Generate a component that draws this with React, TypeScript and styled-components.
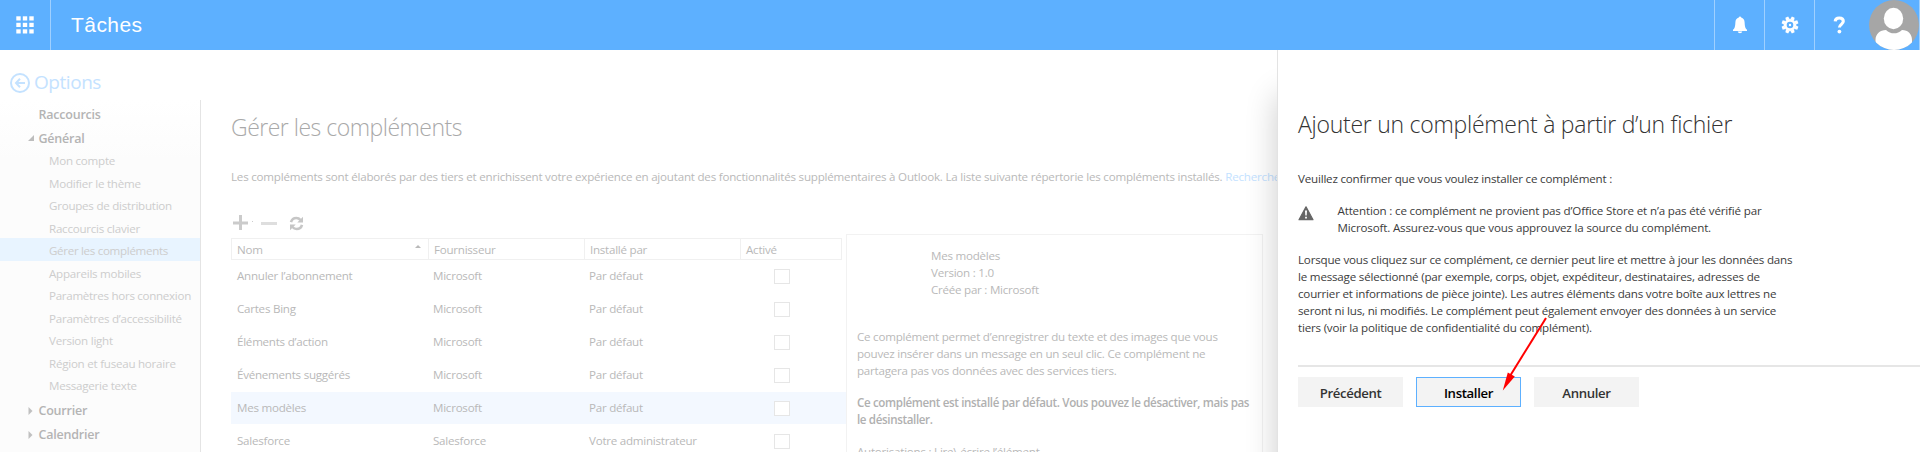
import React from "react";
import styled, { createGlobalStyle } from "styled-components";

const BLUE = "#5db0ff";

const GlobalStyle = createGlobalStyle`
  * { box-sizing: border-box; }
  body { margin: 0; overflow: hidden; background: #fff; }
  p, h1, h2 { margin: 0; font-weight: 400; }
  svg { display: block; }
`;

const Page = styled.div`
  display: flex;
  flex-direction: column;
  width: 1920px;
  height: 452px;
  overflow: hidden;
  font-family: "Open Sans", "Noto Sans", sans-serif;
  font-size: 11.6px;
  letter-spacing: -0.25px;
`;

/* ---------- top bar ---------- */

const TopBar = styled.header`
  display: flex;
  flex: none;
  height: 50px;
  background: ${BLUE};
  color: #fff;
  position: relative;
  z-index: 2;
`;

const Launcher = styled.div`
  width: 51px;
  border-right: 1px solid #9fd0ff;
  display: flex;
  align-items: center;
  justify-content: center;
`;

const AppName = styled.div`
  flex: 1;
  padding-left: 20px;
  font: 21px/49px "Liberation Sans", sans-serif;
  letter-spacing: 0.45px;
`;

const BarButton = styled.div`
  width: 50px;
  border-left: 1px solid #9fd0ff;
  display: flex;
  align-items: center;
  justify-content: center;
`;

const Avatar = styled.div`
  width: 56px;
  padding-left: 5px;
  border-right: 1px solid #9fd0ff;
`;

/* ---------- body ---------- */

const Body = styled.div`
  display: flex;
  flex: 1;
  min-height: 0;
`;

const Side = styled.aside`
  width: 201px;
  flex: none;
  display: flex;
  flex-direction: column;
`;

const BackLink = styled.div`
  display: flex;
  height: 50px;
  flex: none;
  padding: 16px 0 0 10px;
  gap: 4px;
  color: #c4e2ff;
  font-size: 19px;
  line-height: 32px;
  letter-spacing: -0.45px;
  svg { margin-top: 7px; }
`;

const Nav = styled.nav`
  flex: 1;
  min-height: 0;
  padding-top: 2px;
  border-right: 1px solid #e4e4e4;
  background: linear-gradient(#fff, #fcfcfc 60px);
`;

const Group = styled.div`
  display: flex;
  align-items: center;
  height: 24px;
  padding-left: 28px;
  color: #b4b4b4;
  font-size: 12.5px;
  font-weight: 600;
  letter-spacing: -0.22px;
`;

const Marker = styled.span`
  width: 10.5px;
  flex: none;
`;

const SubList = styled.div`
  margin: -2px 0 3px;
`;

const SubItem = styled.div<{ $active?: boolean; $spacing?: number }>`
  height: 22.5px;
  padding: 3px 0 0 49px;
  line-height: 19.5px;
  white-space: nowrap;
  color: #cdcdcd;
  background: ${p => (p.$active ? "#e8f4ff" : "transparent")};
  letter-spacing: ${p => p.$spacing ?? -0.25}px;
`;

const Content = styled.main`
  flex: 1;
  min-width: 0;
  overflow: hidden;
  padding: 61px 0 0 30px;
  color: #b9b9b9;
`;

const Title = styled.h1`
  font-size: 23px;
  line-height: 32px;
  font-weight: 300;
  letter-spacing: -0.5px;
  color: #a9a9a9;
`;

const Intro = styled.p`
  margin-top: 25px;
  line-height: 18px;
  white-space: nowrap;
  letter-spacing: -0.215px;
  a { color: #c4e2ff; }
`;

const Toolbar = styled.div`
  display: flex;
  height: 48px;
  padding: 29px 0 0 2px;
`;

const Split = styled.div`
  display: flex;
`;

const Table = styled.div`
  width: 615px;
  padding-top: 4px;
`;

const HeadRow = styled.div`
  display: grid;
  grid-template-columns: 196px 156px 156px 101px;
  width: 611px;
  height: 22px;
  border: 1px solid #f0f0f0;
  line-height: 21px;
`;

const HeadCell = styled.div`
  display: flex;
  justify-content: space-between;
  padding: 0 7px 0 5px;
  & + & { border-left: 1px solid #f0f0f0; }
  svg { margin-top: 6px; }
`;

const Row = styled.div<{ $selected?: boolean }>`
  display: grid;
  grid-template-columns: 197px 156px 156px 106px;
  height: 32px;
  margin-bottom: 1px;
  line-height: 32px;
  background: ${p => (p.$selected ? "#f3f8ff" : "transparent")};
`;

const Cell = styled.div`
  padding-left: 5px;
  white-space: nowrap;
  &:first-child { padding-left: 6px; }
`;

const Box = styled.div`
  width: 16px;
  height: 15px;
  margin: 9px 0 0 34px;
  border: 1px solid #e6e6e6;
  background: #fff;
`;

const Detail = styled.section`
  width: 417px;
  height: 230px;
  padding: 12px 0 0 10px;
  border: 1px solid #f2f2f2;
  line-height: 17px;
  white-space: nowrap;
`;

const Info = styled.div`
  margin: 0 0 30px 74px;
`;

const Para = styled.p<{ $strong?: boolean }>`
  margin-bottom: 15px;
  font-weight: ${p => (p.$strong ? 600 : 400)};
  letter-spacing: ${p => (p.$strong ? -0.36 : -0.24)}px;
  color: ${p => (p.$strong ? "#b0b0b0" : "inherit")};
`;

/* ---------- right panel ---------- */

const Panel = styled.section`
  position: relative;
  z-index: 1;
  flex: none;
  width: 643px;
  padding: 58px 0 0 20px;
  border-left: 1px solid #e3e3e3;
  background: #fff;
  color: #3c3c3c;
  box-shadow: 0 45px 30px rgba(0, 0, 0, 0.2);
`;

const PanelTitle = styled.h2`
  margin-bottom: 30px;
  font-size: 23px;
  line-height: 32px;
  font-weight: 300;
  letter-spacing: -0.26px;
  color: #333;
`;

const PanelText = styled.p<{ $spacing?: number }>`
  line-height: 17px;
  white-space: nowrap;
  letter-spacing: ${p => p.$spacing ?? -0.2}px;
`;

const Warning = styled.div`
  display: flex;
  gap: 23.5px;
  margin: 15px 0;
  svg { margin-top: 4px; }
`;

const Actions = styled.div`
  display: flex;
  gap: 13px;
  margin-top: 29px;
  padding-top: 10px;
  border-top: 2px solid #e6e6e6;
`;

const Button = styled.button<{ $primary?: boolean }>`
  width: 105px;
  height: 30px;
  padding: 0;
  border: 1px solid ${p => (p.$primary ? BLUE : "#f3f3f3")};
  background: #f3f3f3;
  color: ${p => (p.$primary ? "#000" : "#333")};
  font: 600 13.2px/30px "Open Sans", sans-serif;
  letter-spacing: -0.36px;
`;

const Arrow = styled.svg`
  position: absolute;
  left: 219px;
  top: 264px;
  overflow: visible;
`;

const navItems = [
  { label: "Mon compte" },
  { label: "Modifier le thème" },
  { label: "Groupes de distribution" },
  { label: "Raccourcis clavier" },
  { label: "Gérer les compléments", active: true, spacing: -0.32 },
  { label: "Appareils mobiles" },
  { label: "Paramètres hors connexion", spacing: -0.3 },
  { label: "Paramètres d’accessibilité" },
  { label: "Version light" },
  { label: "Région et fuseau horaire" },
  { label: "Messagerie texte" },
];

const addins = [
  ["Annuler l’abonnement", "Microsoft", "Par défaut"],
  ["Cartes Bing", "Microsoft", "Par défaut"],
  ["Éléments d’action", "Microsoft", "Par défaut"],
  ["Événements suggérés", "Microsoft", "Par défaut"],
  ["Mes modèles", "Microsoft", "Par défaut"],
  ["Salesforce", "Salesforce", "Votre administrateur"],
];

const WaffleIcon = () => (
  <svg width="18" height="18" fill="#fff">
    {[0, 6.5, 13].map(y => [0, 6.5, 13].map(x => <rect key={`${x}-${y}`} x={x + 0.3} y={y + 0.3} width="4.4" height="4.2" />))}
  </svg>
);

const BellIcon = () => (
  <svg width="16" height="18" viewBox="0 0 16 18" fill="#fff">
    <path d="M8 .5c.7 0 1.1.4 1.2 1.1C11.400 2.200 12.500 4 12.600 6.200c.1 4.300.8 6.300 2.400 7.500v1.200H1v-1.200c1.600-1.200 2.300-3.200 2.400-7.500C3.500 4 4.600 2.200 6.800 1.600 6.900.9 7.300.5 8 .5zM5.800 15.600h4.400c-.2 1.100-1 1.700-2.200 1.700s-2-.6-2.200-1.700z" />
  </svg>
);

const GearIcon = () => (
  <svg width="18" height="18" viewBox="-9 -9 18 18" fill="#fff">
    <circle r="4.700" fill="none" stroke="#fff" strokeWidth="2.800" />
    {[0, 45, 90, 135, 180, 225, 270, 315].map(a => (
      <path key={a} d="M-2-5.500L-1.500-8.500H1.500L2-5.500z" transform={`rotate(${a + 22.5})`} />
    ))}
    <circle r="1.200" />
  </svg>
);

const HelpIcon = () => (
  <svg width="13" height="18" viewBox="0 0 13 18">
    <path d="M2.200 5.400C2.300 3.300 3.900 2 6.300 2s4 1.300 4 3.300c0 3-3.900 3.100-3.900 6.300" fill="none" stroke="#fff" strokeWidth="3.100" />
    <circle cx="6.400" cy="15.600" r="1.900" fill="#fff" />
  </svg>
);

const AvatarIcon = () => (
  <svg width="50" height="50" viewBox="0 0 50 50">
    <defs><clipPath id="round"><circle cx="25" cy="25" r="25" /></clipPath></defs>
    <g clipPath="url(#round)">
      <rect width="50" height="50" fill="#a6a6a6" />
      <ellipse cx="24.500" cy="18.500" rx="9.700" ry="10.700" fill="#fff" />
      <path d="M6.500 52V40c0-6 4.500-10 10.500-10 2.500 2.500 5 3.300 8 3.300s5.500-.8 8-3.300c6 0 10 4 10 10v12z" fill="#fff" />
    </g>
  </svg>
);

const BackIcon = () => (
  <svg width="20" height="20" viewBox="0 0 20 20" fill="none" stroke="#c4e2ff" strokeWidth="2">
    <circle cx="10" cy="10" r="9" />
    <path d="M15 10H6.500M10 5.800L6 10l4 4.200" />
  </svg>
);

const ToolbarIcons = () => (
  <svg width="73" height="17" viewBox="0 0 73 17">
    <path d="M0 6.500h15v3H0zM6 0h3v15H6z" fill="#cbcbcb" />
    <path d="M19 6h1v1h-1z" fill="#ccc" />
    <path d="M28 7h16v3H28z" fill="#dedede" />
    <g transform="translate(56.500 1)">
      <g fill="none" stroke="#c6c6c6" strokeWidth="2.600">
        <path d="M1.500 6.200C2.300 3.300 4.300 2 6.800 2c2 0 3.200.8 4.200 2" />
        <path d="M12.500 8.800c-.8 2.900-2.800 4.200-5.300 4.200-2 0-3.200-.8-4.200-2" />
      </g>
      <path d="M13.500.8v5.700H7.800zM.5 14.200V8.500h5.700z" fill="#c6c6c6" />
    </g>
  </svg>
);

const WarningIcon = () => (
  <svg width="16" height="15" viewBox="0 0 16 15">
    <path d="M8 .8L15 13.700H1z" fill="#666" stroke="#666" strokeWidth="1.200" strokeLinejoin="round" />
    <path d="M7 4.500h2l-.3 5H7.300zM7.100 10.700h1.800v1.800H7.100z" fill="#fff" />
  </svg>
);

const ClosedMark = () => (
  <svg width="5" height="8"><path d="M.5 0v8L4.500 4z" fill="#c0c0c0" /></svg>
);

const OpenMark = () => (
  <svg width="6" height="6"><path d="M6 0v6H0z" fill="#bdbdbd" /></svg>
);

export default function App() {
  return (
    <>
      <GlobalStyle />
      <Page>
        <TopBar>
          <Launcher><WaffleIcon /></Launcher>
          <AppName>Tâches</AppName>
          <BarButton><BellIcon /></BarButton>
          <BarButton><GearIcon /></BarButton>
          <BarButton><HelpIcon /></BarButton>
          <Avatar><AvatarIcon /></Avatar>
        </TopBar>
        <Body>
          <Side>
            <BackLink><BackIcon /><span>Options</span></BackLink>
            <Nav>
              <Group><Marker />Raccourcis</Group>
              <Group><Marker><OpenMark /></Marker>Général</Group>
              <SubList>
                {navItems.map(i => (
                  <SubItem key={i.label} $active={i.active} $spacing={i.spacing}>{i.label}</SubItem>
                ))}
              </SubList>
              <Group><Marker><ClosedMark /></Marker>Courrier</Group>
              <Group><Marker><ClosedMark /></Marker>Calendrier</Group>
            </Nav>
          </Side>
          <Content>
            <Title>Gérer les compléments</Title>
            <Intro>
              Les compléments sont élaborés par des tiers et enrichissent votre expérience en ajoutant des fonctionnalités supplémentaires à Outlook. La liste suivante répertorie les compléments installés. <a>Recherche</a>
            </Intro>
            <Toolbar><ToolbarIcons /></Toolbar>
            <Split>
              <Table>
                <HeadRow>
                  <HeadCell>Nom<svg width="6" height="3"><path d="M0 3L3 0l3 3z" fill="#b9b9b9" /></svg></HeadCell>
                  <HeadCell>Fournisseur</HeadCell>
                  <HeadCell>Installé par</HeadCell>
                  <HeadCell>Activé</HeadCell>
                </HeadRow>
                {addins.map(([name, vendor, by]) => (
                  <Row key={name} $selected={name === "Mes modèles"}>
                    <Cell>{name}</Cell>
                    <Cell>{vendor}</Cell>
                    <Cell>{by}</Cell>
                    <Box />
                  </Row>
                ))}
              </Table>
              <Detail>
                <Info>Mes modèles<br />Version : 1.0<br />Créée par : Microsoft</Info>
                <Para>
                  Ce complément permet d’enregistrer du texte et des images que vous<br />
                  pouvez insérer dans un message en un seul clic. Ce complément ne<br />
                  partagera pas vos données avec des services tiers.
                </Para>
                <Para $strong>
                  Ce complément est installé par défaut. Vous pouvez le désactiver, mais pas<br />
                  le désinstaller.
                </Para>
                <Para>Autorisations : Lire\ écrire l’élément</Para>
              </Detail>
            </Split>
          </Content>
          <Panel>
            <PanelTitle>Ajouter un complément à partir d’un fichier</PanelTitle>
            <PanelText>Veuillez confirmer que vous voulez installer ce complément :</PanelText>
            <Warning>
              <WarningIcon />
              <PanelText $spacing={-0.16}>
                Attention : ce complément ne provient pas d’Office Store et n’a pas été vérifié par<br />
                Microsoft. Assurez-vous que vous approuvez la source du complément.
              </PanelText>
            </Warning>
            <PanelText>
              Lorsque vous cliquez sur ce complément, ce dernier peut lire et mettre à jour les données dans<br />
              le message sélectionné (par exemple, corps, objet, expéditeur, destinataires, adresses de<br />
              courrier et informations de pièce jointe). Les autres éléments dans votre boîte aux lettres ne<br />
              seront ni lus, ni modifiés. Le complément peut également envoyer des données à un service<br />
              tiers (voir la politique de confidentialité du complément).
            </PanelText>
            <Actions>
              <Button>Précédent</Button>
              <Button $primary>Installer</Button>
              <Button>Annuler</Button>
            </Actions>
            <Arrow width="56" height="80">
              <path d="M49 4L13 62" stroke="#f00" strokeWidth="2" />
              <path d="M5.800 76.500L10.800 58.500l3.500 2 3.500 2z" fill="#f00" />
            </Arrow>
          </Panel>
        </Body>
      </Page>
    </>
  );
}
